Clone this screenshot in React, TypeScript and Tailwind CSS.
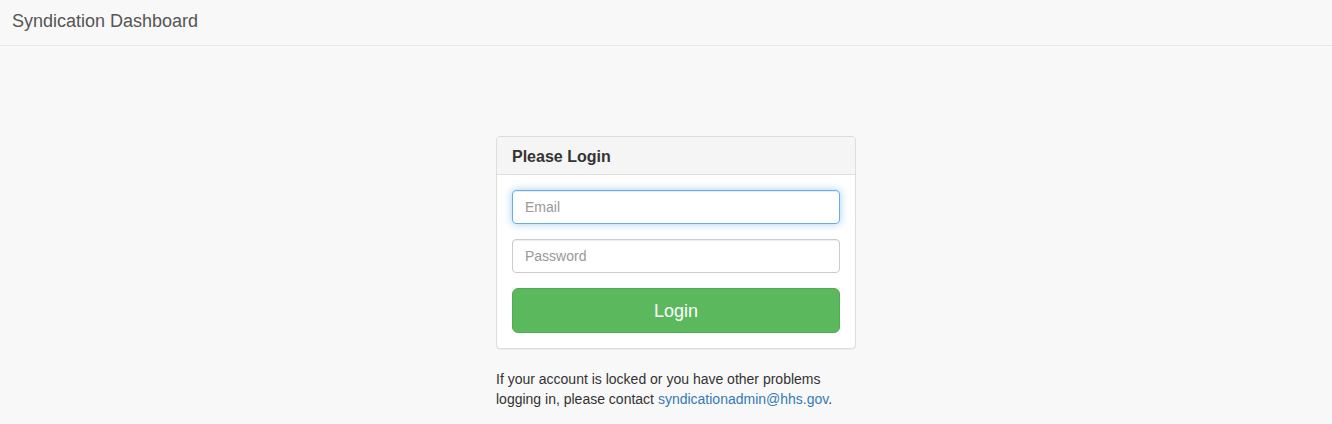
import React from "react";

export default function App() {
  return (
    <div
      className="min-h-[424px] bg-[#f8f8f8] text-[#333] text-[14px] leading-[20px]"
      style={{ fontFamily: '"Liberation Sans", Arial, sans-serif' }}
    >
      <div className="h-[46px] border-b border-[#e7e7e7] bg-[#f8f8f8]">
        <div className="pl-3 pt-[11px] text-[18px] leading-[20px] text-[#555]">Syndication Dashboard</div>
      </div>
      <div className="ml-[496px] w-[360px] pt-[90px]">
        <div className="rounded-[4px] border border-[#ddd] bg-white shadow-[0_1px_1px_rgba(0,0,0,0.05)]">
          <div className="rounded-t-[3px] border-b border-[#ddd] bg-[#f5f5f5] px-[15px] pt-[11px] pb-[9px]">
            <h3 className="text-[16px] leading-[17px] font-bold text-[#333]">Please Login</h3>
          </div>
          <div className="flex flex-col gap-[15px] p-[15px]">
            <input
              type="email"
              placeholder="Email"
              className="h-[34px] w-full rounded-[4px] border border-[#66afe9] px-3 text-[14px] text-[#555] placeholder:text-[#999] outline-none shadow-[inset_0_1px_1px_rgba(0,0,0,0.075),0_0_8px_rgba(102,175,233,0.6)]"
            />
            <input
              type="password"
              placeholder="Password"
              className="h-[34px] w-full rounded-[4px] border border-[#ccc] px-3 text-[14px] text-[#555] placeholder:text-[#999] outline-none shadow-[inset_0_1px_1px_rgba(0,0,0,0.075)]"
            />
            <button className="h-[45px] w-full rounded-[6px] border border-[#4cae4c] bg-[#5cb85c] pt-[1px] text-[18px] text-white">
              Login
            </button>
          </div>
        </div>
        <p className="mt-[20px]">
          If your account is locked or you have other problems
          <br />
          logging in, please contact{" "}
          <a href="#" className="text-[#337ab7]">syndicationadmin@hhs.gov</a>.
        </p>
      </div>
    </div>
  );
}
